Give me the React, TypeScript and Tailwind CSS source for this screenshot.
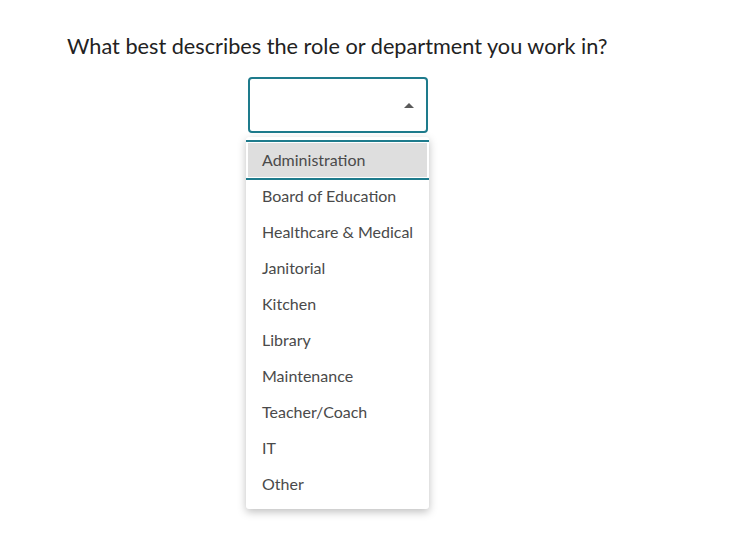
import React from "react";

const items = [
  "Board of Education",
  "Healthcare & Medical",
  "Janitorial",
  "Kitchen",
  "Library",
  "Maintenance",
  "Teacher/Coach",
  "IT",
  "Other",
];

export default function App() {
  return (
    <div
      className="w-[743px] h-[534px] bg-white"
      style={{ fontFamily: "Lato, 'Open Sans', sans-serif" }}
    >
      <div className="pt-[31px] pl-[67px]">
        <h1 className="text-[21.7px] leading-[30px] text-[#222222] font-normal">
          What best describes the role or department you work in?
        </h1>
      </div>
      <div className="ml-[248px] mt-[16px] w-[181px]">
        <div className="h-[56px] w-[180px] rounded-[4px] border-2 border-[#1e7b8c] bg-white flex items-center justify-end pr-[12px]">
          <svg width="10" height="5" viewBox="0 0 10 5">
            <polygon points="0,5 5,0 10,5" fill="#5a5a5a" />
          </svg>
        </div>
      </div>
      <div className="ml-[246px] mt-[4px] w-[183px] bg-white rounded-[3px] shadow-[0_3px_8px_rgba(0,0,0,0.25)] pt-[3px] pb-[7px]">
        <div className="relative z-10 h-[40px] mb-[-2px] border-y-2 border-[#1e7b8c] px-[2px] py-[1px]">
          <div className="h-full bg-[#dedede] flex items-center pl-[14px] text-[16px] text-[#4a4a4a]">
            Administration
          </div>
        </div>
        {items.map((it) => (
          <div
            key={it}
            className="h-[36px] flex items-center pl-[16px] text-[16px] text-[#4a4a4a]"
          >
            {it}
          </div>
        ))}
      </div>
    </div>
  );
}
